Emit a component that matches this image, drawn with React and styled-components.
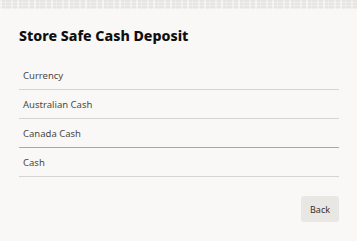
import React from "react";
import styled, { createGlobalStyle } from "styled-components";

const GlobalStyle = createGlobalStyle`
  html, body {
    margin: 0;
    padding: 0;
    background: #f9f8f6;
  }
  body {
    font-family: "Noto Sans", "Liberation Sans", sans-serif;
    color: #161513;
  }
`;

const rows = [
  { label: "Currency" },
  { label: "Australian Cash" },
  { label: "Canada Cash", strong: true },
  { label: "Cash" },
];

export default function App() {
  return (
    <>
      <GlobalStyle />
      <Page>
        <TextureBar />
        <Content>
          <Title>Store Safe Cash Deposit</Title>
          <List>
            {rows.map((r) => (
              <Row key={r.label} $strong={r.strong}>
                {r.label}
              </Row>
            ))}
          </List>
          <Footer>
            <BackButton>Back</BackButton>
          </Footer>
        </Content>
      </Page>
    </>
  );
}

const Page = styled.div`
  width: 357px;
  height: 241px;
  display: flex;
  flex-direction: column;
  background: #f9f8f6;
  overflow: hidden;
`;

const TextureBar = styled.div`
  height: 9px;
  flex-shrink: 0;
  background-color: #e7e5e2;
  background-image:
    repeating-linear-gradient(90deg, rgba(255,255,255,0.5) 0 2px, transparent 2px 5px, rgba(255,255,255,0.25) 5px 6px, transparent 6px 11px, rgba(255,255,255,0.4) 11px 13px, transparent 13px 17px),
    repeating-linear-gradient(0deg, rgba(255,255,255,0.35) 0 1px, transparent 1px 3px);
`;

const Content = styled.div`
  display: flex;
  flex-direction: column;
  padding: 18px 18px 0 19px;
`;

const Title = styled.h1`
  margin: 0;
  font-family: "Noto Sans", "Liberation Sans", sans-serif;
  font-weight: 800;
  font-size: 14.2px;
  line-height: 18px;
  color: #100f0e;
`;

const List = styled.div`
  margin-top: 16px;
  display: flex;
  flex-direction: column;
`;

const Row = styled.div`
  height: 28px;
  display: flex;
  align-items: center;
  padding-left: 4px;
  font-size: 9.5px;
  color: #4a4846;
  border-bottom: 1px solid ${(p) => (p.$strong ? "#a9a7a4" : "#d6d4d1")};
`;

const Footer = styled.div`
  display: flex;
  justify-content: flex-end;
  margin-top: 19px;
`;

const BackButton = styled.button`
  width: 38px;
  height: 26px;
  border: none;
  border-radius: 3px;
  background: #e9e7e4;
  font-family: "Noto Sans", "Liberation Sans", sans-serif;
  font-size: 9px;
  color: #312f2d;
  padding: 0;
`;
